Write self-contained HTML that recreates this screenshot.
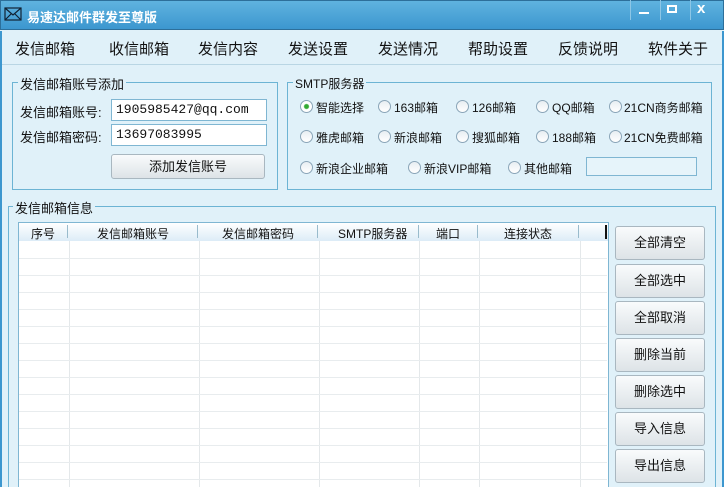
<!DOCTYPE html>
<html><head><meta charset="utf-8"><style>
*{margin:0;padding:0;box-sizing:border-box}
html,body{width:724px;height:487px;overflow:hidden}
body{background:#e0f1f9;font-family:"Liberation Sans","Noto Sans CJK SC",sans-serif;font-size:12px;color:#111;position:relative}
.a{position:absolute}
.title{left:0;top:0;width:724px;height:30px;background:linear-gradient(#5fb3df,#3c97cf);border:1px solid #2d6f9a}
.menu{top:38px;font-size:15px}
.grp{border:1px solid #6cb4d4}
.lg{background:#e0f1f9;padding:0 2px;font-size:13px}
.inp{background:#fff;border:1px solid #7fb6d2;height:22px;font-size:13px;padding:2px 4px;font-family:"Liberation Mono","Noto Sans CJK SC",monospace}
.btn{border:1px solid #a9b7c0;border-radius:3px;background:linear-gradient(#f9fbfc,#dde3e7);text-align:center;font-size:13px}
.rd{width:13px;height:13px;border:1px solid #8aa5b8;border-radius:50%;background:linear-gradient(#e8eef2,#fff)}
.rl{font-size:12px}
.vl{width:1px;background:#e4e8ea;top:241px;height:246px}
.hl{height:1px;background:#e8ecee;left:19px;width:588px}
.sep{width:1px;height:13px;background:#9bc;top:225px}
</style></head><body>
<div class="a title"></div>
<svg class="a" style="left:4px;top:7px" width="18" height="14"><rect x="1" y="1" width="16" height="12" fill="none" stroke="#123" stroke-width="1.2"/><path d="M1 1 L9 8 L17 1 M1 13 L7 7 M17 13 L11 7" fill="none" stroke="#123" stroke-width="1.2"/></svg>
<div class="a" style="left:27px;top:7px;color:#fff;font-weight:bold;font-size:13px">易速达邮件群发至尊版</div>
<div class="a" style="left:630px;top:0;height:20px;border-left:1px solid #8cc6e6"></div>
<div class="a" style="left:660px;top:0;height:20px;border-left:1px solid #8cc6e6"></div>
<div class="a" style="left:690px;top:0;height:20px;border-left:1px solid #8cc6e6"></div>
<div class="a" style="left:639px;top:12px;width:10px;height:2px;background:#fff"></div>
<div class="a" style="left:667px;top:5px;width:10px;height:8px;border:2px solid #fff"></div>
<div class="a" style="left:697px;top:0px;color:#fff;font-size:15px;font-weight:bold">x</div>
<div class="a" style="left:0;top:31px;width:2px;height:456px;background:#3c97cf"></div>
<div class="a" style="left:722px;top:31px;width:2px;height:456px;background:#3c97cf"></div>
<div class="a" style="left:2px;top:64px;width:720px;height:1px;background:#b9d6e4"></div>
<div class="a menu" style="left:15px">发信邮箱</div>
<div class="a menu" style="left:109px">收信邮箱</div>
<div class="a menu" style="left:198px">发信内容</div>
<div class="a menu" style="left:288px">发送设置</div>
<div class="a menu" style="left:378px">发送情况</div>
<div class="a menu" style="left:468px">帮助设置</div>
<div class="a menu" style="left:558px">反馈说明</div>
<div class="a menu" style="left:648px">软件关于</div>

<div class="a grp" style="left:12px;top:82px;width:266px;height:108px"></div>
<div class="a lg" style="left:18px;top:74px">发信邮箱账号添加</div>
<div class="a" style="left:20px;top:102px;font-size:13px">发信邮箱账号:</div>
<div class="a" style="left:20px;top:127px;font-size:13px">发信邮箱密码:</div>
<div class="a inp" style="left:111px;top:99px;width:156px">1905985427@qq.com</div>
<div class="a inp" style="left:111px;top:124px;width:156px">13697083995</div>
<div class="a btn" style="left:111px;top:154px;width:154px;height:25px;line-height:23px">添加发信账号</div>

<div class="a grp" style="left:287px;top:82px;width:425px;height:108px"></div>
<div class="a lg" style="left:293px;top:75px;font-size:12px">SMTP服务器</div>
<div class="a rd" style="left:300px;top:100px;background:radial-gradient(#3a3 0 2px,#fff 3px)"></div><div class="a rl" style="left:316px;top:99px">智能选择</div>
<div class="a rd" style="left:378px;top:100px"></div><div class="a rl" style="left:394px;top:99px">163邮箱</div>
<div class="a rd" style="left:456px;top:100px"></div><div class="a rl" style="left:472px;top:99px">126邮箱</div>
<div class="a rd" style="left:536px;top:100px"></div><div class="a rl" style="left:552px;top:99px">QQ邮箱</div>
<div class="a rd" style="left:609px;top:100px"></div><div class="a rl" style="left:624px;top:99px">21CN商务邮箱</div>
<div class="a rd" style="left:300px;top:130px"></div><div class="a rl" style="left:316px;top:129px">雅虎邮箱</div>
<div class="a rd" style="left:378px;top:130px"></div><div class="a rl" style="left:394px;top:129px">新浪邮箱</div>
<div class="a rd" style="left:456px;top:130px"></div><div class="a rl" style="left:472px;top:129px">搜狐邮箱</div>
<div class="a rd" style="left:536px;top:130px"></div><div class="a rl" style="left:552px;top:129px">188邮箱</div>
<div class="a rd" style="left:609px;top:130px"></div><div class="a rl" style="left:624px;top:129px">21CN免费邮箱</div>
<div class="a rd" style="left:300px;top:161px"></div><div class="a rl" style="left:316px;top:160px">新浪企业邮箱</div>
<div class="a rd" style="left:408px;top:161px"></div><div class="a rl" style="left:424px;top:160px">新浪VIP邮箱</div>
<div class="a rd" style="left:508px;top:161px"></div><div class="a rl" style="left:524px;top:160px">其他邮箱</div>
<div class="a" style="left:586px;top:157px;width:111px;height:19px;border:1px solid #7fb6d2;background:#e6f4fa"></div>

<div class="a grp" style="left:8px;top:206px;width:708px;height:290px"></div>
<div class="a lg" style="left:13px;top:198px">发信邮箱信息</div>
<div class="a" style="left:18px;top:222px;width:591px;height:270px;background:#fff;border:1px solid #7fb6d2"></div>
<div class="a" style="left:19px;top:223px;width:589px;height:18px;background:linear-gradient(#fff,#dcecf7)"></div>
<div class="a" style="left:31px;top:225px">序号</div>
<div class="a" style="left:97px;top:225px">发信邮箱账号</div>
<div class="a" style="left:222px;top:225px">发信邮箱密码</div>
<div class="a" style="left:338px;top:225px">SMTP服务器</div>
<div class="a" style="left:436px;top:225px">端口</div>
<div class="a" style="left:504px;top:225px">连接状态</div>
<div class="a sep" style="left:67px"></div>
<div class="a sep" style="left:197px"></div>
<div class="a sep" style="left:317px"></div>
<div class="a sep" style="left:418px"></div>
<div class="a sep" style="left:477px"></div>
<div class="a sep" style="left:578px"></div>
<div class="a" style="left:605px;top:225px;width:2px;height:14px;background:#111"></div>
<div class="a vl" style="left:69px"></div><div class="a vl" style="left:199px"></div><div class="a vl" style="left:319px"></div><div class="a vl" style="left:419px"></div><div class="a vl" style="left:479px"></div><div class="a vl" style="left:580px"></div>
<div class="a hl" style="top:258px"></div><div class="a hl" style="top:275px"></div><div class="a hl" style="top:292px"></div><div class="a hl" style="top:309px"></div><div class="a hl" style="top:326px"></div><div class="a hl" style="top:343px"></div><div class="a hl" style="top:360px"></div><div class="a hl" style="top:377px"></div><div class="a hl" style="top:394px"></div><div class="a hl" style="top:411px"></div><div class="a hl" style="top:428px"></div><div class="a hl" style="top:445px"></div><div class="a hl" style="top:462px"></div><div class="a hl" style="top:479px"></div>
<div class="a btn" style="left:615px;top:226px;width:90px;height:34px;line-height:32px">全部清空</div>
<div class="a btn" style="left:615px;top:264px;width:90px;height:34px;line-height:32px">全部选中</div>
<div class="a btn" style="left:615px;top:301px;width:90px;height:34px;line-height:32px">全部取消</div>
<div class="a btn" style="left:615px;top:338px;width:90px;height:34px;line-height:32px">删除当前</div>
<div class="a btn" style="left:615px;top:375px;width:90px;height:34px;line-height:32px">删除选中</div>
<div class="a btn" style="left:615px;top:412px;width:90px;height:34px;line-height:32px">导入信息</div>
<div class="a btn" style="left:615px;top:449px;width:90px;height:34px;line-height:32px">导出信息</div>
</body></html>
